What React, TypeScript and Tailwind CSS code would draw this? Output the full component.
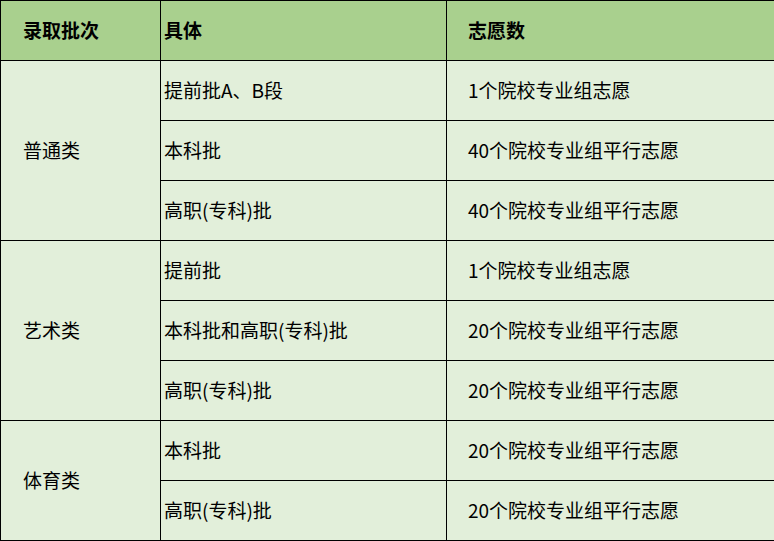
import React from "react";

type Row = { group?: string; span?: number; detail: string; count: string };

const ROWS: Row[] = [
  { group: "普通类", span: 3, detail: "提前批A、B段", count: "1个院校专业组志愿" },
  { detail: "本科批", count: "40个院校专业组平行志愿" },
  { detail: "高职(专科)批", count: "40个院校专业组平行志愿" },
  { group: "艺术类", span: 3, detail: "提前批", count: "1个院校专业组志愿" },
  { detail: "本科批和高职(专科)批", count: "20个院校专业组平行志愿" },
  { detail: "高职(专科)批", count: "20个院校专业组平行志愿" },
  { group: "体育类", span: 2, detail: "本科批", count: "20个院校专业组平行志愿" },
  { detail: "高职(专科)批", count: "20个院校专业组平行志愿" },
];

export default function App() {
  return (
    <div className="w-[774px] h-[541px] bg-white font-['Noto_Sans_CJK_SC','Noto_Sans',sans-serif] text-[19px] text-black">
      <table className="w-[774px] table-fixed border-collapse">
        <colgroup>
          <col className="w-[160px]" />
          <col className="w-[286px]" />
          <col className="w-[328px]" />
        </colgroup>
        <thead>
          <tr className="bg-[#a9d08e] font-bold">
            <th className="h-[60px] border border-black pl-[22px] text-left font-bold">录取批次</th>
            <th className="h-[60px] border border-black pl-[3px] text-left font-bold">具体</th>
            <th className="h-[60px] border border-black pl-[21px] text-left font-bold">志愿数</th>
          </tr>
        </thead>
        <tbody className="bg-[#e2efda]">
          {ROWS.map((r, i) => (
            <tr key={i}>
              {r.group && (
                <td rowSpan={r.span} className="border border-black pl-[22px] align-middle">
                  {r.group}
                </td>
              )}
              <td className="h-[60px] border border-black pl-[3px] align-middle">{r.detail}</td>
              <td className="h-[60px] border border-black pl-[21px] align-middle">{r.count}</td>
            </tr>
          ))}
        </tbody>
      </table>
    </div>
  );
}
